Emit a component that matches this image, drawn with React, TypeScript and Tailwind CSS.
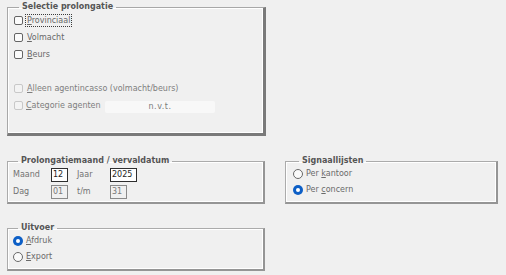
import React from "react";

const font = "font-['DejaVu_Sans',Verdana,sans-serif]";

function Check({ ul, rest, disabled, focus }: { ul: string; rest: string; disabled?: boolean; focus?: boolean }) {
  return (
    <div className="flex h-[17px] items-center">
      <span
        className={`h-[9px] w-[9px] rounded-[2px] border ${disabled ? "border-[#c8c8c8] bg-[#f3f3f3]" : "border-[#646464] bg-[#fbfbfb]"}`}
      />
      <span
        className={`ml-[2px] px-[1px] leading-[11px] ${focus ? "border border-dotted border-[#3a3a3a]" : "border border-transparent"} ${disabled ? "text-[#7e7e7e]" : "text-[#686868]"}`}
      >
        <u>{ul}</u>
        {rest}
      </span>
    </div>
  );
}

function Radio({ before, ul, rest, checked }: { before?: string; ul: string; rest: string; checked?: boolean }) {
  return (
    <div className="flex h-[16px] items-center">
      {checked ? (
        <span className="flex h-[10px] w-[10px] items-center justify-center rounded-full bg-[#0d5fc6]">
          <span className="h-[4px] w-[4px] rounded-full bg-white" />
        </span>
      ) : (
        <span className="h-[10px] w-[10px] rounded-full border border-[#686868] bg-[#fafafa]" />
      )}
      <span className="ml-[3px] text-[#6a6a6a]">
        {before}
        <u>{ul}</u>
        {rest}
      </span>
    </div>
  );
}

function Field({ value, w, disabled }: { value: string; w: string; disabled?: boolean }) {
  return (
    <div
      className={`flex h-[14px] items-center border pl-[1px] ${w} ${disabled ? "border-[#8a8a8a] bg-[#f0f0f0] text-[#7a7a7a]" : "border-[#2e2e2e] bg-white text-[#1e1e1e]"}`}
    >
      {value}
    </div>
  );
}

export default function App() {
  const group =
    "border-l border-t border-r-2 border-b-2 border-l-[#ababab] border-t-[#ababab] border-r-[#959595] border-b-[#959595] shadow-[inset_1px_1px_0_#fff,inset_-1px_-1px_0_#fff]";
  const legend = "px-[3px] text-[8px] font-bold leading-[10px] text-[#555555]";

  return (
    <div className={`h-[275px] w-[506px] overflow-hidden bg-[#f0f0f0] text-[8px] leading-[10px] ${font}`}>
      <fieldset
        className="ml-[7px] mt-[2px] h-[134px] w-[259px] border-l border-t border-r-[3px] border-b-[3px] border-l-[#a8a8a8] border-t-[#a8a8a8] border-r-[#7a7a7a] border-b-[#7a7a7a] pl-[6px] shadow-[inset_1px_1px_0_#fff,inset_-1px_-1px_0_#fff]"
      >
        <legend className={`ml-[5px] ${legend}`}>Selectie prolongatie</legend>
        <Check ul="P" rest="rovinciaal" focus />
        <Check ul="V" rest="olmacht" />
        <Check ul="B" rest="eurs" />
        <div className="mt-[17px]">
          <Check ul="A" rest="lleen agentincasso (volmacht/beurs)" disabled />
        </div>
        <div className="flex h-[17px] items-center">
          <span className="h-[9px] w-[9px] rounded-[2px] border border-[#c8c8c8] bg-[#f3f3f3]" />
          <span className="ml-[3px] w-[79px] text-[#7e7e7e]">
            <u>C</u>ategorie agenten
          </span>
          <div className="mt-[2px] flex h-[12px] w-[110px] items-center justify-center rounded-[2px] bg-[#f8f8f8] tracking-[0.5px] text-[#7c7c7c]">
            n.v.t.
          </div>
        </div>
      </fieldset>

      <div className="mt-[20px] flex">
        <fieldset className={`ml-[7px] h-[48px] w-[258px] pl-[5px] ${group}`}>
          <legend className={`ml-[5px] ${legend}`}>Prolongatiemaand / vervaldatum</legend>
          <div className="mt-[2px] flex items-center text-[#727272]">
            <span className="w-[38px]">Maand</span>
            <Field value="12" w="w-[17px]" />
            <span className="ml-[9px] w-[33px]">Jaar</span>
            <Field value="2025" w="w-[27px]" />
          </div>
          <div className="mt-[3px] flex items-center text-[#727272]">
            <span className="w-[38px]">Dag</span>
            <Field value="01" w="w-[17px]" disabled />
            <span className="ml-[9px] w-[33px]">t/m</span>
            <Field value="31" w="w-[17px]" disabled />
          </div>
        </fieldset>

        <fieldset className={`ml-[20px] h-[48px] w-[213px] pl-[7px] ${group}`}>
          <legend className={`ml-[6px] ${legend}`}>Signaallijsten</legend>
          <Radio before="Per " ul="k" rest="antoor" />
          <Radio before="Per " ul="c" rest="oncern" checked />
        </fieldset>
      </div>

      <fieldset className={`ml-[7px] mt-[19px] h-[48px] w-[258px] pl-[5px] ${group}`}>
        <legend className={`ml-[5px] ${legend}`}>Uitvoer</legend>
        <Radio ul="A" rest="fdruk" checked />
        <Radio ul="E" rest="xport" />
      </fieldset>
    </div>
  );
}
